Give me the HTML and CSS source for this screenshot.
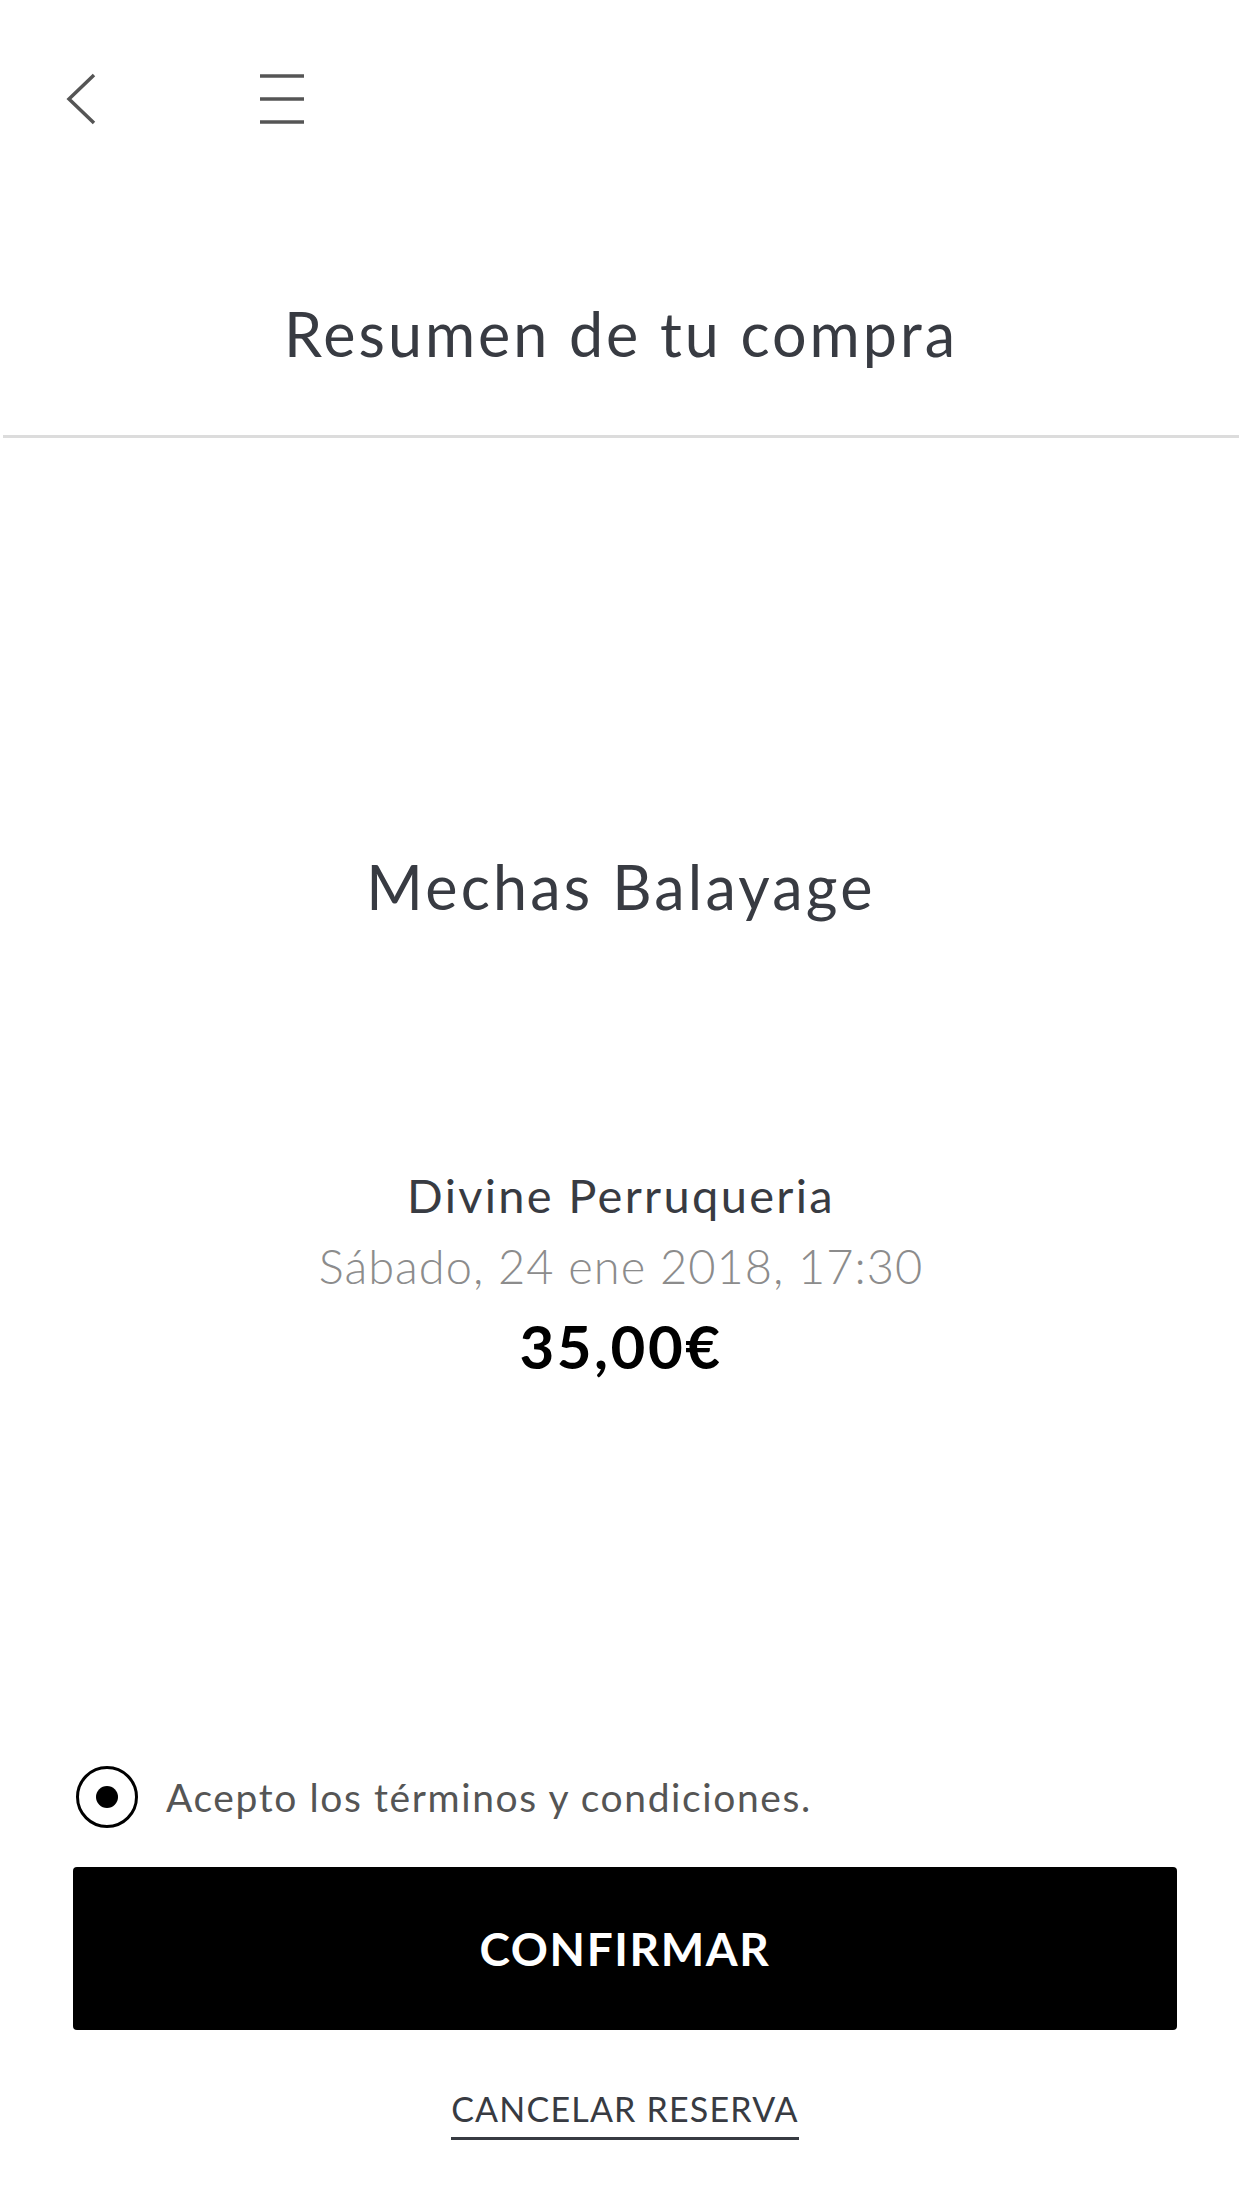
FILE: index.html
```html
<!DOCTYPE html>
<html lang="es">
<head>
    <meta charset="UTF-8">
    <meta name="viewport" content="width=device-width, initial-scale=1.0">
    <title>Resumen de tu compra</title>
    <link rel="stylesheet" href="styles.css">
</head>
<body>
    <div class="topbar">
        <button class="icon-btn back" aria-label="Volver">
            <svg width="32" height="54" viewBox="0 0 32 54">
                <polyline points="28,3 3,27 28,51" fill="none" stroke="#555" stroke-width="3.5"/>
            </svg>
        </button>
        <button class="icon-btn menu" aria-label="Menú">
            <svg width="44" height="50" viewBox="0 0 44 50">
                <line x1="0" y1="2" x2="44" y2="2" stroke="#555" stroke-width="3.5"/>
                <line x1="0" y1="25" x2="44" y2="25" stroke="#555" stroke-width="3.5"/>
                <line x1="0" y1="48" x2="44" y2="48" stroke="#555" stroke-width="3.5"/>
            </svg>
        </button>
    </div>

    <h1 class="page-title">Resumen de tu compra</h1>

    <div class="summary">
        <h2 class="service">Mechas Balayage</h2>
        <p class="salon">Divine Perruqueria</p>
        <p class="date">Sábado, 24 ene 2018, 17:30</p>
        <p class="price">35,00€</p>
    </div>

    <div class="actions">
        <label class="terms">
            <span class="radio"><span class="dot"></span></span>
            Acepto los términos y condiciones.
        </label>
        <button class="confirm">CONFIRMAR</button>
        <div class="cancel-row">
            <a class="cancel" href="#">CANCELAR RESERVA</a>
        </div>
    </div>
</body>
</html>
```

FILE: styles.css
```css
body {
    margin: 0;
    background: #fff;
    font-family: "Lato", "Open Sans", sans-serif;
    color: #383b42;
}

.topbar {
    height: 198px;
    display: flex;
    align-items: center;
    padding-left: 66px;
}

.icon-btn {
    background: none;
    border: none;
    padding: 0;
    display: flex;
}

.menu {
    margin-left: 162px;
}

.page-title {
    margin: 0 3px;
    padding: 100px 0 65px;
    font-size: 61px;
    line-height: 72px;
    font-weight: 400;
    text-align: center;
    letter-spacing: 3px;
    border-bottom: 3px solid #dcdcdc;
}

.summary {
    text-align: center;
}

.service {
    margin: 409px 0 0;
    font-size: 61px;
    line-height: 80px;
    font-weight: 400;
    letter-spacing: 3.2px;
}

.salon {
    margin: 233px 0 0;
    font-size: 47px;
    line-height: 70px;
    letter-spacing: 2.3px;
}

.date {
    margin: 1px 0 0;
    font-size: 47px;
    line-height: 70px;
    font-weight: 300;
    color: #8c8c8c;
    letter-spacing: 1px;
}

.price {
    margin: 5px 0 0;
    font-size: 60px;
    line-height: 80px;
    font-weight: 700;
    color: #000;
    letter-spacing: 2.5px;
}

.actions {
    padding: 0 65px 0 73px;
}

.terms {
    margin-top: 379px;
    height: 64px;
    display: flex;
    align-items: center;
    gap: 28px;
    font-size: 39px;
    color: #555;
    letter-spacing: 1.6px;
}

.radio {
    width: 56px;
    height: 56px;
    border: 3px solid #000;
    border-radius: 50%;
    display: flex;
    align-items: center;
    justify-content: center;
    margin-left: 3px;
}

.dot {
    width: 22px;
    height: 22px;
    border-radius: 50%;
    background: #000;
}

.confirm {
    display: block;
    width: 100%;
    height: 163px;
    margin-top: 38px;
    background: #000;
    color: #fff;
    border: none;
    border-radius: 4px;
    font-family: "Lato", sans-serif;
    font-size: 46px;
    font-weight: 700;
    letter-spacing: 1.6px;
}

.cancel-row {
    margin-top: 57px;
    text-align: center;
}

.cancel {
    display: inline-block;
    line-height: 44px;
    padding-bottom: 6px;
    border-bottom: 3px solid #383b42;
    color: #383b42;
    text-decoration: none;
    font-size: 34px;
    letter-spacing: 1.2px;
}
```
